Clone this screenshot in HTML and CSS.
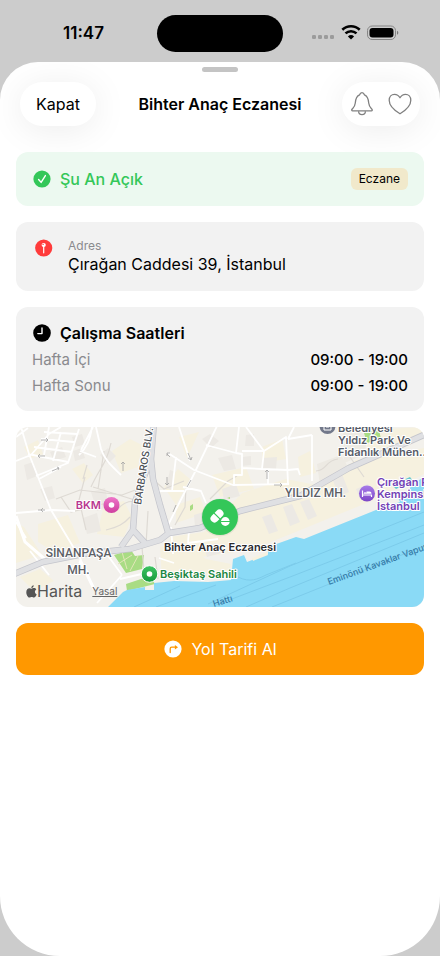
FILE: index.html
```html
<!DOCTYPE html>
<html lang="tr">
<head>
  <meta charset="UTF-8">
  <meta name="viewport" content="width=device-width, initial-scale=1.0">
  <title>Bihter Anaç Eczanesi</title>
  <link rel="stylesheet" href="styles.css">
</head>
<body>
  <div class="status-bar">
    <span class="time">11:47</span>
    <span class="island"></span>
    <span class="indicators">
      <svg width="24" height="20" viewBox="0 0 24 20" fill="#9b9b9b">
        <rect x="1" y="12" width="4" height="4" rx="1.300"/><rect x="7" y="12" width="4" height="4" rx="1.300"/><rect x="13" y="12" width="4" height="4" rx="1.300"/><rect x="19" y="12" width="4" height="4" rx="1.300"/>
      </svg>
      <svg width="20" height="20" viewBox="0 0 20 20" fill="none" stroke="#000" stroke-width="2.600">
        <path d="M1.300 6.800a12.600 12.600 0 0 1 17.400 0"/>
        <path d="M4.500 10.400a8 8 0 0 1 11 0"/>
        <path d="M6.900 13.500a4.500 4.500 0 0 1 6.200 0l-3.100 3.100z" fill="#000" stroke="none"/>
      </svg>
      <svg width="32" height="20" viewBox="0 0 32 20">
        <rect x=".5" y="3" width="28" height="13.500" rx="4.600" fill="none" stroke="#858585"/>
        <rect x="2.500" y="5" width="24" height="9.500" rx="3"/>
        <path d="M30 7.700c1.800.8 1.800 3.300 0 4.100z" fill="#777"/>
      </svg>
    </span>
  </div>

  <main class="sheet">
    <div class="grabber"></div>

    <header class="nav">
      <button type="button" class="pill close">Kapat</button>
      <h1>Bihter Anaç Eczanesi</h1>
      <div class="pill actions">
        <button type="button" aria-label="Bildirimler">
          <svg width="24" height="26" viewBox="0 0 24 26" fill="none" stroke="#808080" stroke-width="1.300" stroke-linejoin="round">
            <path d="M2.600 19.800h18.800c.9 0 1.200-.8.6-1.500-1.400-1.600-3-2.900-3.300-6.300-.3-4.400-.9-7.100-4.300-8.200C14 2.500 13.200 1.700 12 1.700S10 2.500 9.600 3.800C6.200 4.900 5.600 7.600 5.300 12c-.3 3.400-1.900 4.700-3.300 6.300-.6.7-.3 1.500.6 1.500z"/>
            <path d="M8.600 20.200a3.400 3.400 0 0 0 6.800 0"/>
          </svg>
        </button>
        <button type="button" aria-label="Favorilere ekle">
          <svg width="24" height="26" viewBox="0 0 24 26" fill="none" stroke="#808080" stroke-width="1.300" stroke-linejoin="round">
            <path d="M12 22.800C9.500 21.300 1.200 15.700 1.200 9.300c0-3.500 2.300-6 5.300-6 2.500 0 4.300 1.300 5.500 3.500 1.200-2.200 3-3.500 5.500-3.500 3 0 5.300 2.500 5.300 6 0 6.400-8.300 12-10.800 13.500z"/>
          </svg>
        </button>
      </div>
    </header>

    <div class="content">
      <section class="card card-open">
        <svg width="20" height="20" viewBox="0 0 20 20">
          <circle cx="10" cy="10" r="8.600" fill="#34c759"/>
          <path d="M6.600 10.500l2.500 2.900 4.300-6.800" fill="none" stroke="#fff" stroke-width="1.400" stroke-linecap="round" stroke-linejoin="round"/>
        </svg>
        <span class="open-label">Şu An Açık</span>
        <span class="badge">Eczane</span>
      </section>

      <section class="card card-address">
        <svg width="24" height="20" viewBox="0 0 24 20">
          <circle cx="11.700" cy="10" r="8.600" fill="#ff3b3b"/>
          <circle cx="11.700" cy="7" r="2.100" fill="#fff"/>
          <path d="M11.700 8v6.800" stroke="#fff" stroke-width="1.200" stroke-linecap="round"/>
          <circle cx="11.100" cy="6.400" r=".7" fill="#ff3b3b"/>
        </svg>
        <div>
          <p class="address-label">Adres</p>
          <p class="address-text">Çırağan Caddesi 39, İstanbul</p>
        </div>
      </section>

      <section class="card card-hours">
        <h2>
          <svg width="20" height="20" viewBox="0 0 20 20">
            <circle cx="10" cy="10" r="8.800"/>
            <path d="M10 5v5.600H5.800" fill="none" stroke="#fff" stroke-width="1.400" stroke-linecap="round" stroke-linejoin="round"/>
          </svg>
          Çalışma Saatleri
        </h2>
        <table class="hours">
          <tr><th scope="row">Hafta İçi</th><td>09:00 - 19:00</td></tr>
          <tr><th scope="row">Hafta Sonu</th><td>09:00 - 19:00</td></tr>
        </table>
      </section>

      <section class="map">
        <svg class="map-canvas" viewBox="0 0 408 180" preserveAspectRatio="xMidYMid slice">
          <defs>
            <linearGradient id="pink" x2="0" y2="1"><stop stop-color="#ee77c9"/><stop offset="1" stop-color="#cf3f9f"/></linearGradient>
            <linearGradient id="green" x2="0" y2="1"><stop stop-color="#3fc463"/><stop offset="1" stop-color="#159a3c"/></linearGradient>
            <linearGradient id="purple" x2="0" y2="1"><stop stop-color="#a77be8"/><stop offset="1" stop-color="#7c45c8"/></linearGradient>
          </defs>
          <rect width="408" height="180" fill="#f3f1ec"/>

          <!-- blocks -->
          <g fill="#f6f1df">
            <path d="M8 20l14-7 5 14-13 5zM56 42l12-6 9 12-10 8zM22 97l30-9 12 28-26 9-16-10zM96 24l18-12 12 6-4 22-17 6zM88 78l20-4 8 16-8 20-27-3zM0 96l8 4 18 28-26 8zM4 150l20-8 14 12-20 10zM160 78l24-8 6 16-30 10zM163 10l20-5-12 26zM196 48l34-8 8 22-34 8z"/>
            <path d="M226 66l44-14 30 6 40-25 68-12v26l-50 26-76 31-40 16-28 6-58 8-2-24 34-5zM144 120l20-6 26 18 25 5-3 12-66 4zM246 20l20-8 4 20-24 4zM282 30l12-6 6 22-16 4zM148 60l14-18 12 10-14 26zM350 3l58-3v8l-56 28z"/>
          </g>
          <g fill="#ece9e4">
            <path d="M8 38l9-3 4 14-10 4zM34 25l12-5 4 10-12 4zM56 10l10-3 3 10-10 3zM57 24l9-3 3 10-10 3zM24 62l12-3 3 12-10 3zM75 65l14-4 4 18-12 5zM67 91l14-5 4 18-14 3zM84 28l8-7 8 8-8 8zM202 31l14-3 4 14-12 2zM186 12l8-5 9 7-8 7zM230 8l8-1v12h-9zM247 31l14-1-1 12-14 1zM178 88l10-3 4 12-13 3zM206 62l14-5 4 12-16 4zM154 43l5 2-3 18-6-2zM188 119l12-3 5 10-14 4zM246 90l9-3 7 17-9 3zM267 80l9-3 8 18-10 4zM284 75l9-3 8 17-9 4zM316 51l10-4 7 18-10 4zM340 62l12-5 5 9-13 6zM226 30l9-1v9l-10 1z"/>
          </g>
          <path d="M301 37l24-9 7 12-28 18zM327 0h27l-6 28-20 8z" fill="#edeae3"/>

          <!-- parks -->
          <g fill="#a9dc84">
            <path d="M98 128l17-5 4 6 9-1-2 14-16 4zM110 157l24-8 5 8-28 7zM348 6l15-3 2 9-14 4z"/>
            <path d="M174 79l3-2v5l-3 2zM211 71l3-1v2z"/>
          </g>
          <path d="M106 125l5 17M116 128l-14 9M122 129l-8 15" fill="none" stroke="#e2e6b8" stroke-width="1"/>

          <!-- sea -->
          <path d="M92 180l15-15 4-2 18-3v3h9v-7l20-2 34 1 23-2 2-21 11-4 3 7 21-8v-7l28-10 8 2 72-29 24-8-3-7 12-3 2-7 13-8 11-1v136z" fill="#8adaf6"/>
          <path d="M236 131l15-6 1 3-15 6z" fill="#f7f1df"/>
          <path d="M376 58l18-8 3 4-17 8z" fill="#64c8d0"/>
          <g fill="none" stroke="#7ccbea" stroke-width="1">
            <path d="M192 177l82-38L408 85M200 178l74-28L408 98M230 180l44-19L408 106M256 180l20-8L408 119M140 180l60-22M118 180l46-21M222 150c12 6 20 2 28-2l30-12"/>
          </g>

          <!-- footpaths -->
          <g fill="none" stroke="#dedad4" stroke-width="1.200">
            <path d="M40 72l24-9 42 5 16-6M69 50l-6 23 7 30M71 38l-4 14M88 24l-6 38M45 70l10 15 36-9M90 103c12-3 18-6 24-13M101 83c7-9 14-10 22-8M95 16c-4 20-12 26-20 44M77 60l45 14M132 84l-2 34M134 50l14 12 20-8M194 72l18-18 9-5M159 98l10-18 1-20M300 44c12-1 8-10 22-12M334 30l14 20M126 120l2 24M139 130l3 22"/>
          </g>

          <!-- streets -->
          <g fill="none" stroke="#fff" stroke-width="1.800" stroke-linejoin="round">
            <path d="M5 0l8 27 22 56 30 50M0 34l15-6 18-21L45 0M0 10l12-9M20 49l32-13 11-34M23 52l22-12M12 27l40 8M18 20l38 5M25 12l33 3M28 5l33 2M33 0l-5 28M45 5l-8 29M65 23l12-23M64 24l16 6M80 0l5 22c4 12 12 18 20 26M76 0c-2 13-5 20-13 28M0 86l36-3 23 1M0 95l10 16M14 124l19 24M90 126l16 22M63 135l9 10M106 148l-25 28M104 152l26-6"/>
            <path d="M201-1l-23 48-28 55M152 26l26 17 39 15 56-1M160 30l-4 34M142 64h26M167 60l18 4 5 12M163 0l11 34M190 18l30 8 3-26M220 26l6 1v21h-8v11M226 24h22l-2 18-20-1M248 24l22-14 2 47M272 12l24-4M230 0l18 24M246 42l26 1M252 43v15M272 43l10-1 2 6M296 8v46M278 0l-6 12M173 103l-1 13 30-4M172 102l34-3M155 100l2 27M158 136l-15-5"/>
          </g>
          <g fill="none" stroke="#fff" stroke-width="3">
            <path d="M0 89l9 26 22 19M64 133l14 29"/>
          </g>

          <!-- main roads -->
          <g fill="none" stroke-linejoin="round">
            <g stroke="#c4c5cc" stroke-width="6.500">
              <path d="M-2 147l29-12 40-8 47-5 30-9 9-7 31-5 40-17 60-15 49-28L410 7"/>
              <path d="M138-4l-3 36-8 20-8 23-2 28-12 17M135 32l2 20 7 26 8 27M117 103l13 14"/>
            </g>
            <g stroke="#dfe0e3" stroke-width="5">
              <path d="M-2 147l29-12 40-8 47-5 30-9 9-7 31-5 40-17 60-15 49-28L410 7"/>
              <path d="M138-4l-3 36-8 20-8 23-2 28-12 17M135 32l2 20 7 26 8 27M117 103l13 14"/>
            </g>
          </g>
          <g fill="none" stroke="#a3a3a3" stroke-width=".8">
            <path d="M25 13h7m-2-2l2 2-2 2M22 29h7m-7 0l2-2m-2 2l2 2M36 44l7-3m-2-1l2 1-1 2M22 83h7m-2-2l-2 2 2 2M107 44v-9m-2 2l2-2 2 2M151 50v8m-2-2l2 2 2-2M251 52v-9m-2 2l2-2 2 2M258 58h8m-2-2l2 2-2 2M171 60l4-7M172 26l3 7m-3-2l3 2 1-3M157 85l3-7M154 30l-3-3m3-1h-3v3"/>
          </g>

          <!-- places -->
          <circle cx="95.500" cy="78" r="8" fill="url(#pink)"/><circle cx="95.500" cy="78" r="2.800" fill="#fff"/>
          <circle cx="133.500" cy="147" r="8.300" fill="url(#green)" stroke="#fff" stroke-width="1"/><circle cx="133.500" cy="147" r="2.800" fill="#fff"/>
          <circle cx="311.500" cy="-1" r="8" fill="#72788a"/>
          <path d="M308-2h7v5h-7zM310 0h3" fill="none" stroke="#fff"/>
          <circle cx="351" cy="66.500" r="8" fill="url(#purple)"/>
          <path d="M346.500 63.500v6.500M346.500 68h9v2" fill="none" stroke="#fff" stroke-width="1.200"/>
          <path d="M347.500 66.700h8c0-1.500-.8-2.200-2-2.200h-3v1.300c-.8-1-2.500-1-3 .9z" fill="#fff"/>

          <g class="map-text">
            <text class="district" x="62.500" y="130" text-anchor="middle">SİNANPAŞA</text>
            <text class="district" x="62.500" y="147" text-anchor="middle">MH.</text>
            <text class="district" x="299.500" y="70" text-anchor="middle">YILDIZ MH.</text>
            <text class="street" transform="translate(125 78) rotate(-81)">BARBAROS BLV.</text>
            <text class="poi bkm" x="85" y="82" text-anchor="end">BKM</text>
            <text class="poi shore" x="144" y="151">Beşiktaş Sahili</text>
            <text class="poi office" x="322" y="5">Belediyesi</text>
            <text class="poi office" x="322" y="17">Yıldız Park Ve</text>
            <text class="poi office" x="322" y="29">Fidanlık Mühen…</text>
            <text class="poi hotel" x="361" y="59">Çırağan P</text>
            <text class="poi hotel" x="361" y="71">Kempinski</text>
            <text class="poi hotel" x="361" y="83">İstanbul</text>
          </g>
          <text class="ferry" transform="translate(313 158) rotate(-20)">Eminönü Kavaklar Vapuru</text>
          <text class="ferry" transform="translate(198 180) rotate(-17)">Hattı</text>

          <!-- selected pharmacy -->
          <circle cx="204" cy="90.500" r="19" fill="#000" opacity=".06"/>
          <circle cx="204" cy="90" r="18" fill="#34c759"/>
          <g transform="rotate(-45 201 89)">
            <rect x="193.500" y="85" width="15" height="8" rx="4" fill="#fff"/>
            <path d="M201 84.500v9" stroke="#34c759" stroke-width="1.200"/>
          </g>
          <circle cx="209.300" cy="94.500" r="5.300" fill="#34c759"/>
          <circle cx="209.300" cy="94.500" r="4.400" fill="#fff"/>
          <path d="M204.500 94.500h9.600" stroke="#34c759" stroke-width="1.200"/>
          <text class="map-title" x="204" y="124" text-anchor="middle">Bihter Anaç Eczanesi</text>
        </svg>
        <div class="attribution">
          <span class="maps-logo">
            <svg width="11" height="13" viewBox="0 0 11 13" fill="#555">
              <path d="M7.700.2c.1 1.500-1.100 2.800-2.400 2.700C5.200 1.600 6.400.4 7.700.2zM5.500 3.700c.6 0 1.300-.6 2.400-.6 1 0 1.900.5 2.400 1.300-2 1.200-1.700 3.900.4 4.800-.5 1.500-1.600 3.400-2.800 3.400-.9 0-1.200-.6-2.200-.6s-1.400.6-2.200.6C1.900 12.600.3 9.700.3 7.200.3 4.700 1.800 3.200 3.400 3.200c.9 0 1.600.5 2.100.5z"/>
            </svg>
            Harita
          </span>
          <a href="#" class="legal">Yasal</a>
        </div>
      </section>

      <button type="button" class="directions">
        <svg width="20" height="20" viewBox="0 0 20 20">
          <circle cx="10" cy="10" r="8.600" fill="#fff"/>
          <path d="M7.200 13.500V9.800c0-1 .5-1.600 1.500-1.600h3.600" fill="none" stroke="#ff9800" stroke-width="1.300" stroke-linecap="round"/>
          <path d="M11.900 5.900l3.100 2.300-3.100 2.300z" fill="#ff9800"/>
        </svg>
        Yol Tarifi Al
      </button>
    </div>
  </main>
</body>
</html>
```
FILE: styles.css
```css
* {
  box-sizing: border-box;
}
body {
  margin: 0;
  min-height: 100vh;
  display: flex;
  flex-direction: column;
  background: #ccc;
  color: #000;
  font-family: Inter, "Liberation Sans", sans-serif;
  font-size: 16px;
}
h1,
h2,
p {
  margin: 0;
}
button {
  font: inherit;
  color: inherit;
  border: none;
  padding: 0;
  background: none;
  cursor: pointer;
}
svg {
  display: block;
  flex-shrink: 0;
}

/* status bar */
.status-bar {
  height: 62px;
  padding: 4px 0 0;
  display: grid;
  grid-template-columns: 1fr 126px 1fr;
  align-items: center;
}
.time {
  padding-left: 10px;
  text-align: center;
  font-size: 17px;
  font-weight: 600;
}
.island {
  height: 37px;
  border-radius: 19px;
  background: #000;
}
.indicators {
  display: flex;
  justify-content: center;
  gap: 6px;
  padding-right: 14px;
}

/* sheet */
.sheet {
  flex: 1;
  background: #fff;
  border-radius: 38px 38px 60px 60px;
  overflow: hidden;
}
.grabber {
  width: 36px;
  height: 5px;
  margin: 5px auto 10px;
  border-radius: 3px;
  background: #c4c4c4;
}
.nav {
  display: grid;
  grid-template-columns: 1fr auto 1fr;
  align-items: center;
  padding: 0 20px;
}
.nav h1 {
  font-size: 16px;
  font-weight: 600;
}
.pill {
  height: 44px;
  border-radius: 22px;
  background: #fff;
  box-shadow: 0 4px 36px rgba(0, 0, 0, 0.08);
}
.close {
  justify-self: start;
  padding: 0 16px;
}
.actions {
  justify-self: end;
  display: flex;
  align-items: center;
  gap: 14px;
  padding: 0 8px;
}
.content {
  display: flex;
  flex-direction: column;
  gap: 16px;
  padding: 26px 16px;
}

/* cards */
.card {
  padding: 16px;
  border-radius: 12px;
  background: #f2f2f2;
}
.card-open {
  display: flex;
  align-items: center;
  gap: 8px;
  background: #ecf9f0;
}
.open-label {
  color: #34c759;
  font-weight: 500;
  line-height: 22px;
}
.badge {
  margin-left: auto;
  padding: 0 8px;
  border-radius: 6px;
  background: #f1e9cb;
  font-size: 12px;
  line-height: 22px;
}
.card-address {
  display: flex;
  gap: 12px;
}
.address-label {
  color: #8a8a8e;
  font-size: 12px;
  line-height: 15px;
}
.address-text {
  line-height: 22px;
}
.card-hours h2 {
  display: flex;
  align-items: center;
  gap: 8px;
  font-size: 16px;
  font-weight: 600;
  line-height: 20px;
}
.hours {
  width: 100%;
  margin-top: 4px;
  margin-bottom: -4px;
  border-collapse: collapse;
  font-size: 15px;
  line-height: 18px;
}
.hours th,
.hours td {
  padding: 4px 0;
}
.hours th {
  color: #8a8a8e;
  font-weight: 400;
  text-align: left;
}
.hours td {
  font-weight: 500;
  text-align: right;
}

/* map */
.map {
  position: relative;
  height: 180px;
  border-radius: 12px;
  overflow: hidden;
}
.map-canvas {
  width: 100%;
  height: 100%;
}
.map-text {
  paint-order: stroke;
  stroke: #fff;
  stroke-width: 2px;
  stroke-linejoin: round;
}
.district {
  fill: #5c6066;
  font-family: Roboto, sans-serif;
  font-size: 12px;
  font-weight: 500;
}
.street {
  fill: #4b4f55;
  font-size: 10px;
  font-weight: 500;
}
.poi {
  font-size: 11px;
  font-weight: 600;
}
.bkm {
  fill: #b8378f;
}
.shore {
  fill: #1b8742;
}
.office {
  fill: #565b68;
}
.hotel {
  fill: #7241b5;
}
.ferry {
  fill: #3479a6;
  font-size: 9px;
  font-weight: 500;
}
.map-title {
  fill: #2b2b2d;
  font-size: 11px;
  font-weight: 600;
  paint-order: stroke;
  stroke: #fff;
  stroke-width: 2px;
  stroke-linejoin: round;
}
.attribution {
  position: absolute;
  left: 10px;
  bottom: 6px;
  display: flex;
  align-items: center;
  gap: 10px;
  color: #555;
}
.maps-logo {
  display: flex;
  align-items: center;
  font-size: 16px;
  line-height: 20px;
}
.legal {
  color: #666;
  font-size: 10px;
}

.directions {
  display: flex;
  align-items: center;
  justify-content: center;
  gap: 8px;
  height: 52px;
  border-radius: 12px;
  background: #ff9800;
  color: #fff;
}
```
